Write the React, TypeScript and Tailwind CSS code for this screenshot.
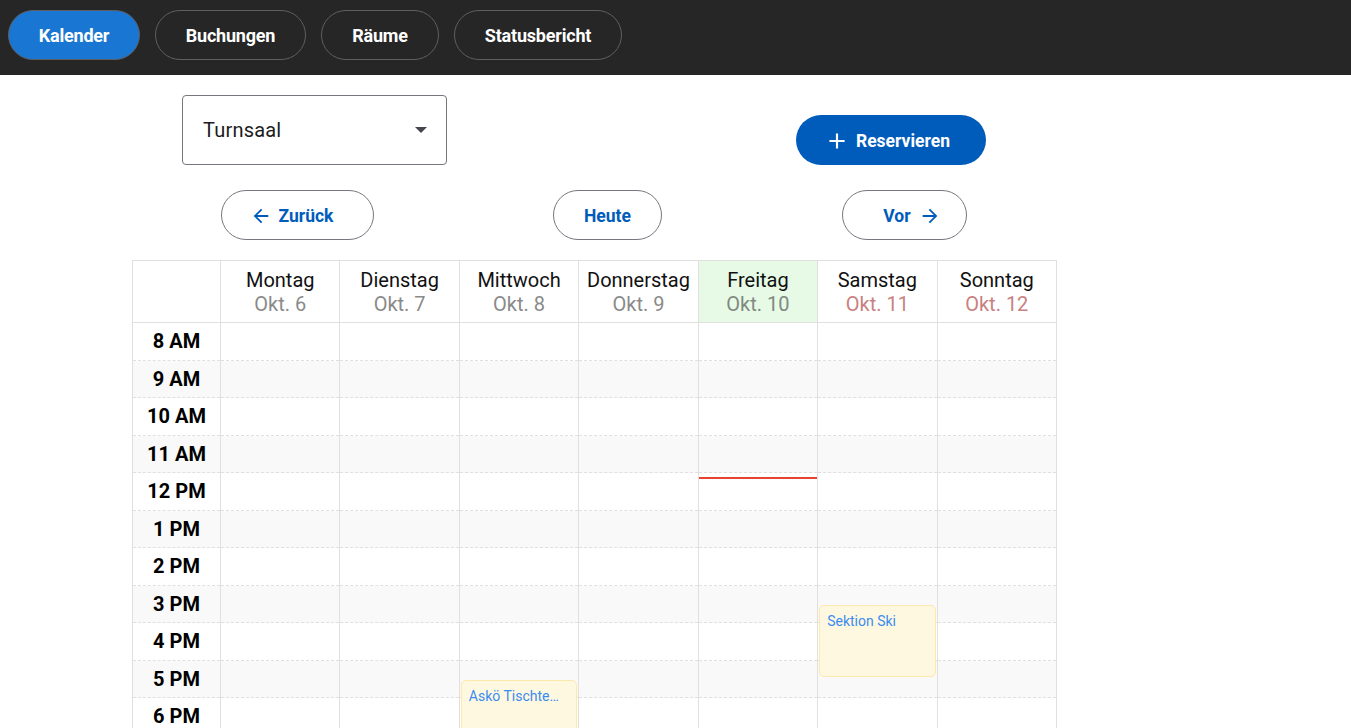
import React from "react";
import { MdArrowBack, MdArrowForward, MdAdd } from "react-icons/md";

const days = [
  { name: "Montag", date: "Okt. 6" },
  { name: "Dienstag", date: "Okt. 7" },
  { name: "Mittwoch", date: "Okt. 8" },
  { name: "Donnerstag", date: "Okt. 9" },
  { name: "Freitag", date: "Okt. 10", today: true },
  { name: "Samstag", date: "Okt. 11", weekend: true },
  { name: "Sonntag", date: "Okt. 12", weekend: true },
];

const hours = [
  "8 AM", "9 AM", "10 AM", "11 AM", "12 PM", "1 PM", "2 PM", "3 PM",
  "4 PM", "5 PM", "6 PM", "7 PM", "8 PM", "9 PM",
];

const ROW = 37.5;

type Ev = { day: number; start: number; end: number; title: string };
const events: Ev[] = [
  { day: 5, start: 15.5, end: 17.5, title: "Sektion Ski" },
  { day: 2, start: 17.5, end: 19.5, title: "Askö Tischtennis" },
];

function NavButton({ label, active, w }: { label: string; active?: boolean; w: string }) {
  return (
    <button
      className={
        "h-[50px] rounded-full border border-[#5f5e63] text-[18px] font-bold text-white tracking-[-0.2px] " +
        w +
        (active ? " bg-[#1976d2]" : " bg-transparent")
      }
    >
      {label}
    </button>
  );
}

export default function App() {
  return (
    <div className="min-h-screen bg-white font-['Roboto',sans-serif]">
      <nav className="flex h-[75px] items-start gap-[15px] bg-[#262626] pl-[8px] pt-[10px]">
        <NavButton label="Kalender" active w="w-[132px]" />
        <NavButton label="Buchungen" w="w-[151px]" />
        <NavButton label="Räume" w="w-[118px]" />
        <NavButton label="Statusbericht" w="w-[168px]" />
      </nav>

      <div className="flex items-start pt-[20px]">
        <div className="ml-[182px] flex h-[70px] w-[265px] items-center justify-between rounded-[4px] border border-[#79747e] pl-[20px] pr-[19px]">
          <span className="text-[20px] text-[#1d1b20] tracking-[0.2px]">Turnsaal</span>
          <svg width="12" height="6" viewBox="0 0 12 6">
            <polygon points="0,0 12,0 6,6" fill="#49454f" />
          </svg>
        </div>
        <button className="ml-[349px] mt-[20px] flex h-[50px] w-[190px] items-center justify-center gap-[6px] rounded-full bg-[#005cbb] pr-[8px] pt-[2px] text-[17.5px] font-bold text-white">
          <MdAdd size={26} />
          <span>Reservieren</span>
        </button>
      </div>

      <div className="mt-[25px] flex items-center">
        <button className="ml-[221px] flex h-[50px] w-[153px] items-center justify-center gap-[7px] rounded-full border border-[#79747e] pr-[12px] pt-[2px] text-[17.5px] font-bold text-[#005cbb]">
          <MdArrowBack size={22} />
          <span>Zurück</span>
        </button>
        <button className="ml-[179px] flex h-[50px] w-[109px] items-center justify-center rounded-full border border-[#79747e] pt-[2px] text-[17.5px] font-bold text-[#005cbb]">
          Heute
        </button>
        <button className="ml-[180px] flex h-[50px] w-[125px] items-center justify-center gap-[8px] rounded-full border border-[#79747e] pl-[15px] pt-[2px] text-[17.5px] font-bold text-[#005cbb]">
          <span>Vor</span>
          <MdArrowForward size={22} />
        </button>
      </div>

      <div className="ml-[132px] mt-[20px] w-[925px] border-l border-t border-[#e0e0e0]">
        <div className="grid grid-cols-[88px_repeat(7,1fr)]">
          <div className="h-[62px] border-b border-r border-[#e0e0e0]" />
          {days.map((d) => (
            <div
              key={d.name}
              className={
                "flex h-[62px] flex-col items-center border-b border-r border-[#e0e0e0] pt-[7px] text-[20px] leading-[24px]" +
                (d.today ? " bg-[#e6fae6]" : "")
              }
            >
              <span className="text-[#111]">{d.name}</span>
              <span className={d.weekend ? "text-[#c98181]" : d.today ? "text-[#808a80]" : "text-[#8a8a8a]"}>
                {d.date}
              </span>
            </div>
          ))}
        </div>

        <div className="grid grid-cols-[88px_repeat(7,1fr)]">
          <div className="flex flex-col border-r border-[#e0e0e0]">
            {hours.map((h, i) => (
              <div
                key={h}
                className={
                  "flex h-[37.5px] items-center justify-center border-b border-dashed border-[#e0e0e0] text-[20px] font-bold text-black" +
                  (i % 2 === 1 ? " bg-[#f9f9f9]" : "")
                }
              >
                {h}
              </div>
            ))}
          </div>
          {days.map((d, di) => (
            <div key={d.name} className="relative flex flex-col border-r border-[#e0e0e0]">
              {hours.map((h, i) => (
                <div
                  key={h}
                  className={
                    "h-[37.5px] border-b border-dashed border-[#e0e0e0]" + (i % 2 === 1 ? " bg-[#f9f9f9]" : "")
                  }
                />
              ))}
              {d.today && <div className="absolute left-0 right-0 top-[154px] h-[2px] bg-[#e8432f]" />}
              {events
                .filter((e) => e.day === di)
                .map((e) => (
                  <div
                    key={e.title}
                    className="absolute left-[1px] right-[1px] overflow-hidden rounded-[5px] border border-[#fde9a9] bg-[#fff8e1] pl-[7px] pr-[12px] pt-[6px]"
                    style={{ top: (e.start - 8) * ROW + 1, height: (e.end - e.start) * ROW - 3 }}
                  >
                    <div className="truncate text-[14px] leading-[18px] text-[#3a8cf2]">{e.title}</div>
                  </div>
                ))}
            </div>
          ))}
        </div>
      </div>
    </div>
  );
}
